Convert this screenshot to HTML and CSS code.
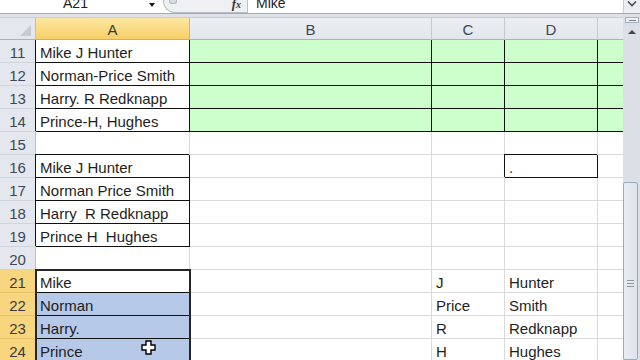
FILE: index.html
```html
<!DOCTYPE html>
<html>
<head>
<meta charset="utf-8">
<link rel="stylesheet" href="styles.css">
</head>
<body>
<div class="app">
  <div class="fbar">
    <div class="namebox"><span class="nb-text">A21</span><span class="nb-arrow"></span></div>
    <div class="fx-area"><span class="knob"></span><span class="fx">f<span class="fx-x">x</span></span></div>
    <div class="finput">Mike</div>
    <div class="expand"><svg width="10" height="6" viewBox="0 0 10 6"><path d="M1 0.5 L5 4.5 L9 0.5" fill="none" stroke="#4a4f57" stroke-width="1.6"/></svg></div>
  </div>
  <div class="main">
    <div class="sheetwrap">
      <div class="strip"></div>
      <div class="sheet">
        <div class="corner"><span class="tri"></span></div>
        <div class="ch sel">A</div><div class="ch">B</div><div class="ch">C</div><div class="ch">D</div><div class="ch"></div>

        <div class="rh">11</div><div class="c k kt">Mike J Hunter</div><div class="c g k kt"></div><div class="c g k kt"></div><div class="c g k kt"></div><div class="c g k kt"></div>
        <div class="rh">12</div><div class="c k">Norman-Price Smith</div><div class="c g k"></div><div class="c g k"></div><div class="c g k"></div><div class="c g k"></div>
        <div class="rh">13</div><div class="c k">Harry. R Redknapp</div><div class="c g k"></div><div class="c g k"></div><div class="c g k"></div><div class="c g k"></div>
        <div class="rh">14</div><div class="c k">Prince-H, Hughes</div><div class="c g k"></div><div class="c g k"></div><div class="c g k"></div><div class="c g k"></div>
        <div class="rh">15</div><div class="c"></div><div class="c"></div><div class="c"></div><div class="c"></div><div class="c"></div>
        <div class="rh">16</div><div class="c k">Mike J Hunter</div><div class="c"></div><div class="c"></div><div class="c k">.</div><div class="c"></div>
        <div class="rh">17</div><div class="c k">Norman Price Smith</div><div class="c"></div><div class="c"></div><div class="c"></div><div class="c"></div>
        <div class="rh">18</div><div class="c k">Harry  R Redknapp</div><div class="c"></div><div class="c"></div><div class="c"></div><div class="c"></div>
        <div class="rh">19</div><div class="c k">Prince H  Hughes</div><div class="c"></div><div class="c"></div><div class="c"></div><div class="c"></div>
        <div class="rh">20</div><div class="c"></div><div class="c"></div><div class="c"></div><div class="c"></div><div class="c"></div>
        <div class="rh sel">21</div><div class="c k">Mike</div><div class="c"></div><div class="c">J</div><div class="c">Hunter</div><div class="c"></div>
        <div class="rh sel">22</div><div class="c k s">Norman</div><div class="c"></div><div class="c">Price</div><div class="c">Smith</div><div class="c"></div>
        <div class="rh sel">23</div><div class="c k s">Harry.</div><div class="c"></div><div class="c">R</div><div class="c">Redknapp</div><div class="c"></div>
        <div class="rh sel">24</div><div class="c k s">Prince</div><div class="c"></div><div class="c">H</div><div class="c">Hughes</div><div class="c"></div>
      </div>
      <div class="selection"></div>
      <svg class="cursor" width="16" height="16" viewBox="0 0 16 16"><path d="M5 1 H10 V5 H14 V10 H10 V14 H5 V10 H1 V5 H5 Z" fill="#fff" stroke="#000" stroke-width="1.4" stroke-linejoin="miter"/></svg>
    </div>
    <div class="vscroll">
      <div class="split"><span></span></div>
      <div class="upbtn"><span class="uptri"></span></div>
      <div class="thumb"><span class="grip"></span></div>
    </div>
  </div>
</div>
</body>
</html>
```
FILE: styles.css
```css
* { box-sizing: border-box; margin: 0; padding: 0; }
html, body { width: 640px; height: 360px; overflow: hidden; background: #fff; }
body { font-family: "Liberation Sans", Arial, sans-serif; color: #1e1e1e; }

.app { width: 640px; height: 360px; display: flex; flex-direction: column; overflow: hidden; }

/* formula bar */
.fbar { flex: none; height: 14px; display: flex; border-bottom: 1px solid #a3aab4; background: #fff; overflow: hidden; font-size: 14px; line-height: 7px; }
.namebox { width: 163px; display: flex; }
.nb-text { flex: 1; text-align: center; padding-left: 2px; color: #222; }
.nb-arrow { width: 0; height: 0; margin: 3px 8px 0 0; border-left: 3px solid transparent; border-right: 3px solid transparent; border-top: 4px solid #1a1a1a; }
.fx-area { width: 84px; background: #eef0f3; border-left: 1px solid #b7bdc6; border-bottom: 1px solid #b7bdc6; border-radius: 0 0 0 12px; display: flex; justify-content: space-between; padding: 0 6px 0 5px; }
.knob { width: 8px; height: 4px; background: #d9dde3; border: 1px solid #b0b7c1; border-top: none; border-radius: 0 0 3px 3px; }
.fx { font-family: "Liberation Serif", serif; font-style: italic; font-weight: bold; font-size: 13px; color: #333; }
.fx-x { font-size: 10px; }
.finput { flex: 1; border-left: 1px solid #bcc1c8; padding-left: 8px; color: #222; }
.expand { width: 17px; background: #eceef2; border-left: 1px solid #c6cbd2; display: flex; justify-content: center; padding-top: 1px; }

.main { flex: 1; display: flex; min-height: 0; }
.sheetwrap { width: 623px; position: relative; overflow: hidden; }
.strip { height: 3px; background: #dfe3e9; }

.sheet { display: grid; grid-template-columns: 36px 154px 242px 73px 93px 40px; grid-auto-rows: 23px; width: 638px; font-size: 15px; }

.corner { background: #e4e8ee; border-right: 1px solid #b8c0cb; border-bottom: 1px solid #a9b2be; border-top: 1px solid #c9ced6; display: flex; justify-content: flex-end; align-items: flex-end; padding: 0 4px 3px 0; }
.tri { width: 11px; height: 11px; background: #c6ccd4; clip-path: polygon(100% 0, 100% 100%, 0 100%); }

.ch { background: linear-gradient(#eceff3, #e2e6eb); border-right: 1px solid #c5cad1; border-bottom: 1px solid #a9b2be; border-top: 1px solid #c9ced6; color: #3d4756; text-align: center; display: flex; align-items: flex-end; justify-content: center; line-height: 17px; padding-bottom: 1px; }
.ch.sel { background: linear-gradient(#fce7a4, #f7cf66); border-right-color: #d9b45a; color: #3a3a3a; }

.rh { background: #e4e8ee; border-right: 1px solid #b8c0cb; border-bottom: 1px solid #d0d5dc; color: #3d4756; display: flex; align-items: flex-end; justify-content: center; line-height: 17px; padding-bottom: 1px; }
.rh.sel { background: #f8d680; border-bottom-color: #e9c46c; border-right-color: #d9a94a; color: #3a3a3a; }

.c { border-right: 1px solid #dadada; border-bottom: 1px solid #dadada; display: flex; align-items: flex-end; padding: 0 3px 1px 4px; line-height: 17px; white-space: pre; overflow: visible; }
.c.g { background: #ccffcc; }
.c.s { background: #b6c9e8; }
.c.k { border-right-color: #111; border-bottom-color: #111; box-shadow: -1px -1px 0 0 #111; }
.c.k.kt { box-shadow: -1px 0 0 0 #111; }

.selection { position: absolute; left: 35px; top: 255px; width: 156px; height: 100px; border: 2px solid #262626; pointer-events: none; }
.cursor { position: absolute; left: 141px; top: 326px; }

/* vertical scrollbar */
.vscroll { width: 17px; background: #dce0e6; display: flex; flex-direction: column; align-items: stretch; }
.split { height: 6px; margin: 3px 1px 0 2px; background: #eef0f3; border: 1px solid #a8b0bb; display: flex; align-items: center; justify-content: center; }
.split span { width: 7px; height: 1px; background: #7d8590; }
.upbtn { height: 17px; display: flex; justify-content: center; align-items: center; }
.uptri { width: 0; height: 0; border-left: 4px solid transparent; border-right: 4px solid transparent; border-bottom: 4px solid #3e4450; }
.thumb { margin: 142px 2px 0 0; flex: 1; background: linear-gradient(90deg, #e9edf3, #dde3eb); border: 1px solid #9fa9b7; border-radius: 2px; display: flex; justify-content: center; padding-top: 97px; }
.grip { width: 7px; height: 7px; background: repeating-linear-gradient(#8d96a3 0 1px, transparent 1px 3px); }
```
